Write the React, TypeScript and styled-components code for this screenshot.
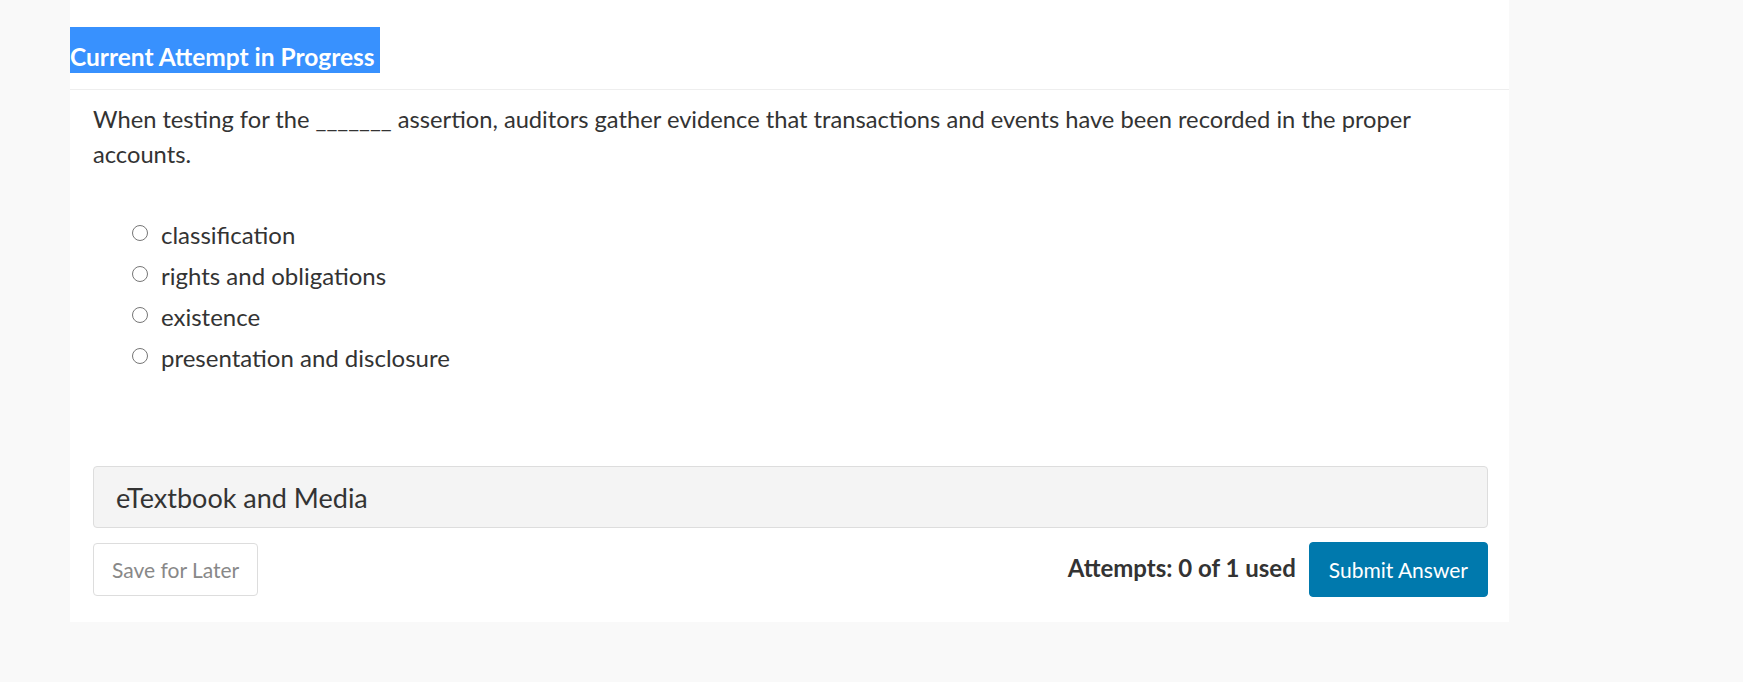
import styled, { createGlobalStyle } from "styled-components";

const GlobalStyle = createGlobalStyle`
    html, body {
        margin: 0;
        padding: 0;
        background: #f9f9f9;
        font-family: "Lato", "Open Sans", sans-serif;
        color: #333;
    }
`;

const Panel = styled.main`
    width: 1439px;
    margin-left: 70px;
    background: #fff;
    padding-bottom: 25px;
`;

const Header = styled.header`
    display: flex;
    padding-top: 27px;
    padding-bottom: 16px;
    border-bottom: 1px solid #eee;
`;

const Title = styled.h2`
    margin: 0;
    height: 46px;
    padding-right: 5px;
    background: #3891fe;
    color: #fff;
    font-size: 24.5px;
    font-weight: 700;
    line-height: 60px;
    overflow: hidden;
    box-sizing: border-box;
`;

const Body = styled.section`
    padding: 12px 21px 0 23px;
`;

const Question = styled.p`
    margin: 0;
    font-size: 23.7px;
    line-height: 35px;
`;

const Options = styled.ul`
    list-style: none;
    margin: 44px 0 0;
    padding: 0 0 0 39px;
    display: flex;
    flex-direction: column;
    gap: 5px;
`;

const Option = styled.li`
    display: flex;
    align-items: center;
    gap: 13px;
    height: 36px;
    font-size: 24px;
`;

const Radio = styled.span`
    width: 16px;
    height: 16px;
    border: 1.5px solid #767676;
    border-radius: 50%;
    box-sizing: border-box;
    flex: none;
    margin-top: -3px;
`;

const Media = styled.div`
    margin-top: 91px;
    height: 62px;
    box-sizing: border-box;
    border: 1px solid #ddd;
    border-radius: 4px;
    background: #f4f4f4;
    padding-left: 22px;
    display: flex;
    align-items: center;
    font-size: 27px;
`;

const Footer = styled.div`
    margin-top: 14px;
    display: flex;
    align-items: center;
    justify-content: space-between;
`;

const Actions = styled.div`
    display: flex;
    align-items: center;
    gap: 13px;
`;

const Attempts = styled.span`
    font-size: 24px;
    font-weight: 700;
    color: #333;
    margin-top: -4px;
`;

const Button = styled.button<{ $primary?: boolean }>`
    font-family: inherit;
    font-size: 21px;
    border-radius: 4px;
    cursor: pointer;
    box-sizing: border-box;
    height: ${(p) => (p.$primary ? "55px" : "53px")};
    padding: 0 ${(p) => (p.$primary ? "19px" : "18px")};
    border: 1px solid ${(p) => (p.$primary ? "#0079ad" : "#ddd")};
    background: ${(p) => (p.$primary ? "#0079ad" : "#fff")};
    color: ${(p) => (p.$primary ? "#fff" : "#888")};
`;

const options = [
    "classification",
    "rights and obligations",
    "existence",
    "presentation and disclosure",
];

export default function App() {
    return (
        <>
            <GlobalStyle />
            <Panel>
                <Header>
                    <Title>Current Attempt in Progress</Title>
                </Header>
                <Body>
                    <Question>
                        When testing for the _______ assertion, auditors gather evidence that
                        transactions and events have been recorded in the proper accounts.
                    </Question>
                    <Options>
                        {options.map((o) => (
                            <Option key={o}>
                                <Radio />
                                {o}
                            </Option>
                        ))}
                    </Options>
                    <Media>eTextbook and Media</Media>
                    <Footer>
                        <Button>Save for Later</Button>
                        <Actions>
                            <Attempts>Attempts: 0 of 1 used</Attempts>
                            <Button $primary>Submit Answer</Button>
                        </Actions>
                    </Footer>
                </Body>
            </Panel>
        </>
    );
}
